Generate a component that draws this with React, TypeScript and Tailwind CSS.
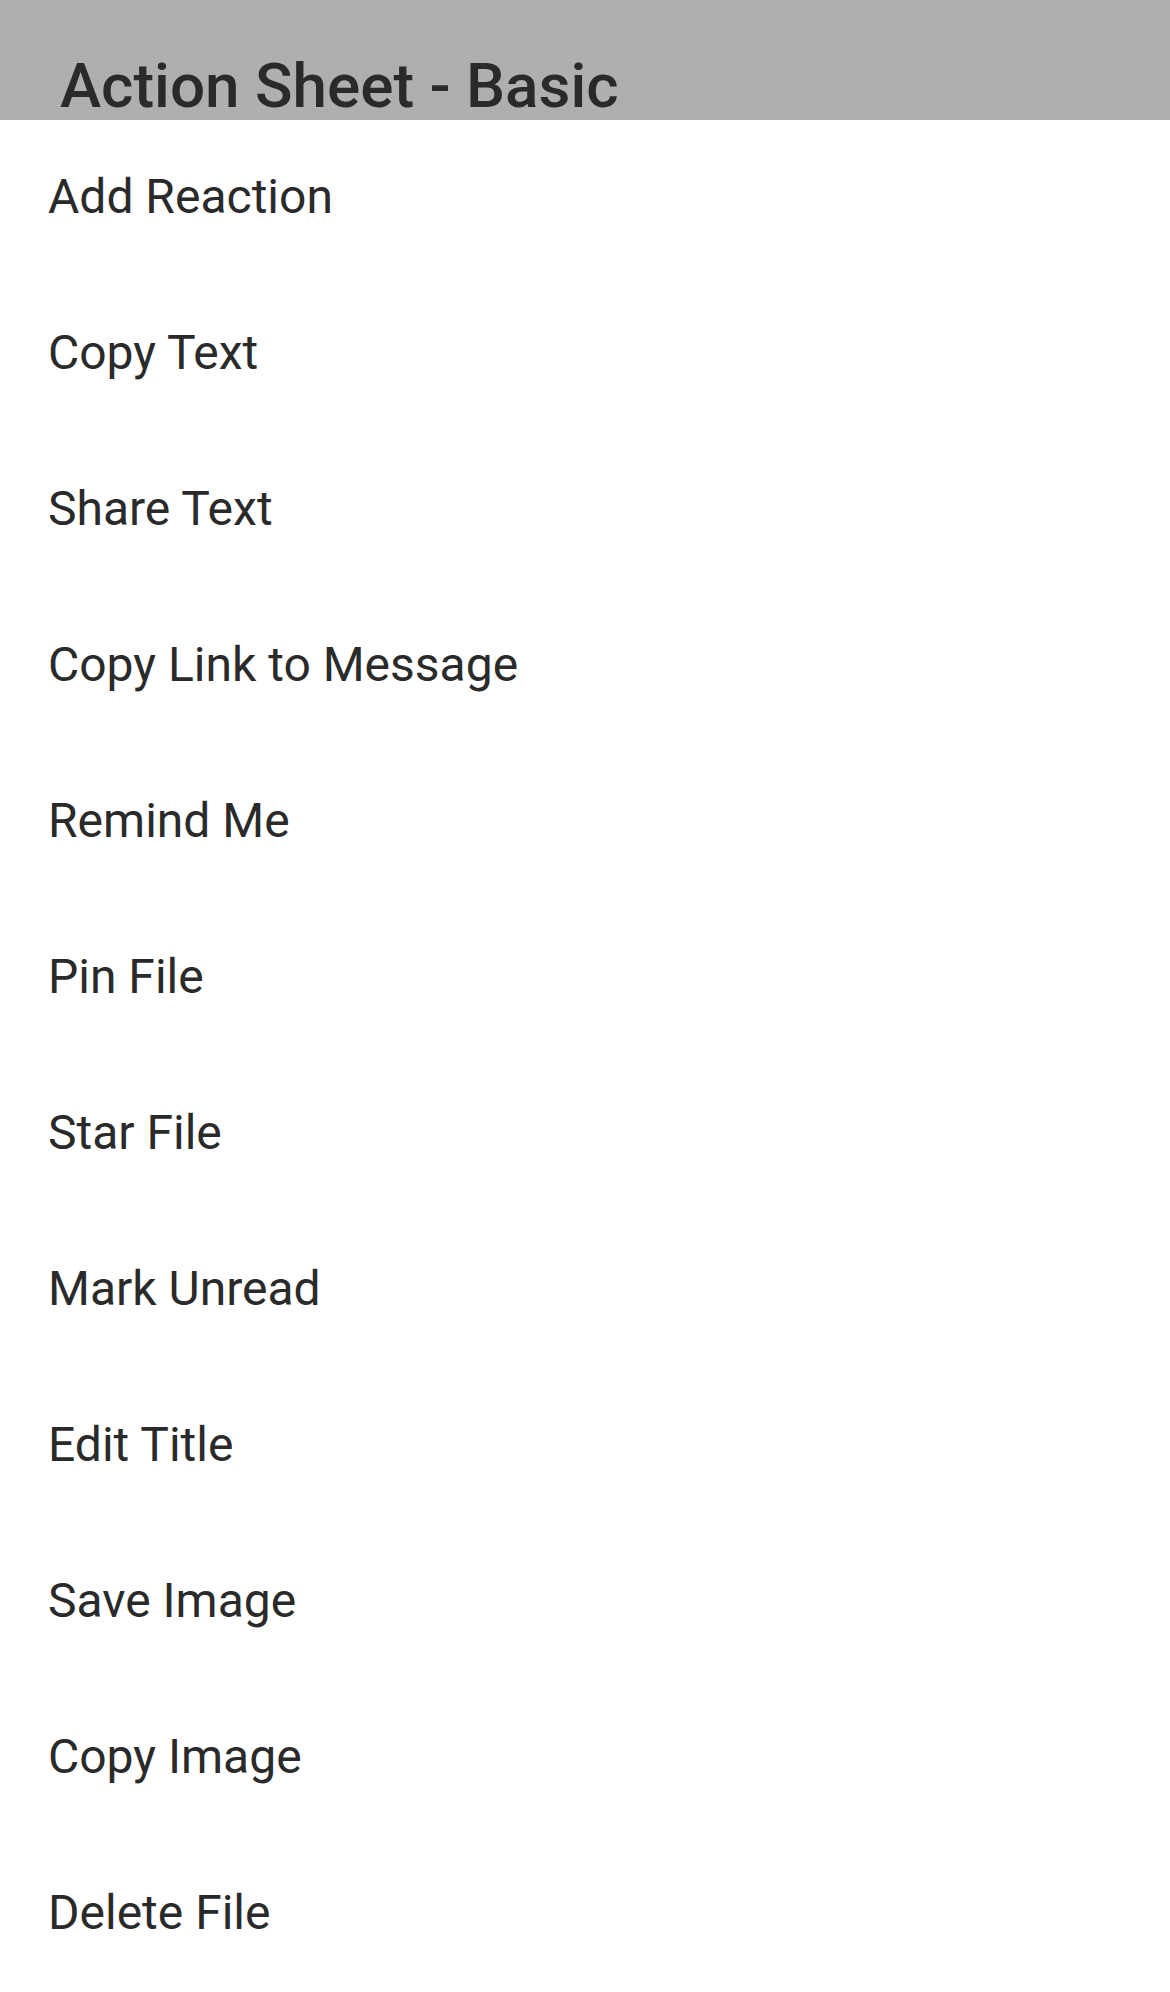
const items = [
  "Add Reaction",
  "Copy Text",
  "Share Text",
  "Copy Link to Message",
  "Remind Me",
  "Pin File",
  "Star File",
  "Mark Unread",
  "Edit Title",
  "Save Image",
  "Copy Image",
  "Delete File",
];

export default function App() {
  return (
    <div className="min-h-screen w-[1170px] bg-white font-['Roboto',sans-serif] text-[#2a2a2a]">
      {/* Header */}
      <div className="flex h-[120px] items-end bg-[#afafaf] pb-[3px] pl-[60px]">
        <h1 className="text-[62px] font-medium leading-none">Action Sheet - Basic</h1>
      </div>

      {/* Items */}
      <div className="flex flex-col">
        {items.map((label) => (
          <div key={label} className="flex h-[156px] items-center pb-[2px] pl-[48px]">
            <span className="text-[48px] leading-none">{label}</span>
          </div>
        ))}
      </div>
    </div>
  );
}
